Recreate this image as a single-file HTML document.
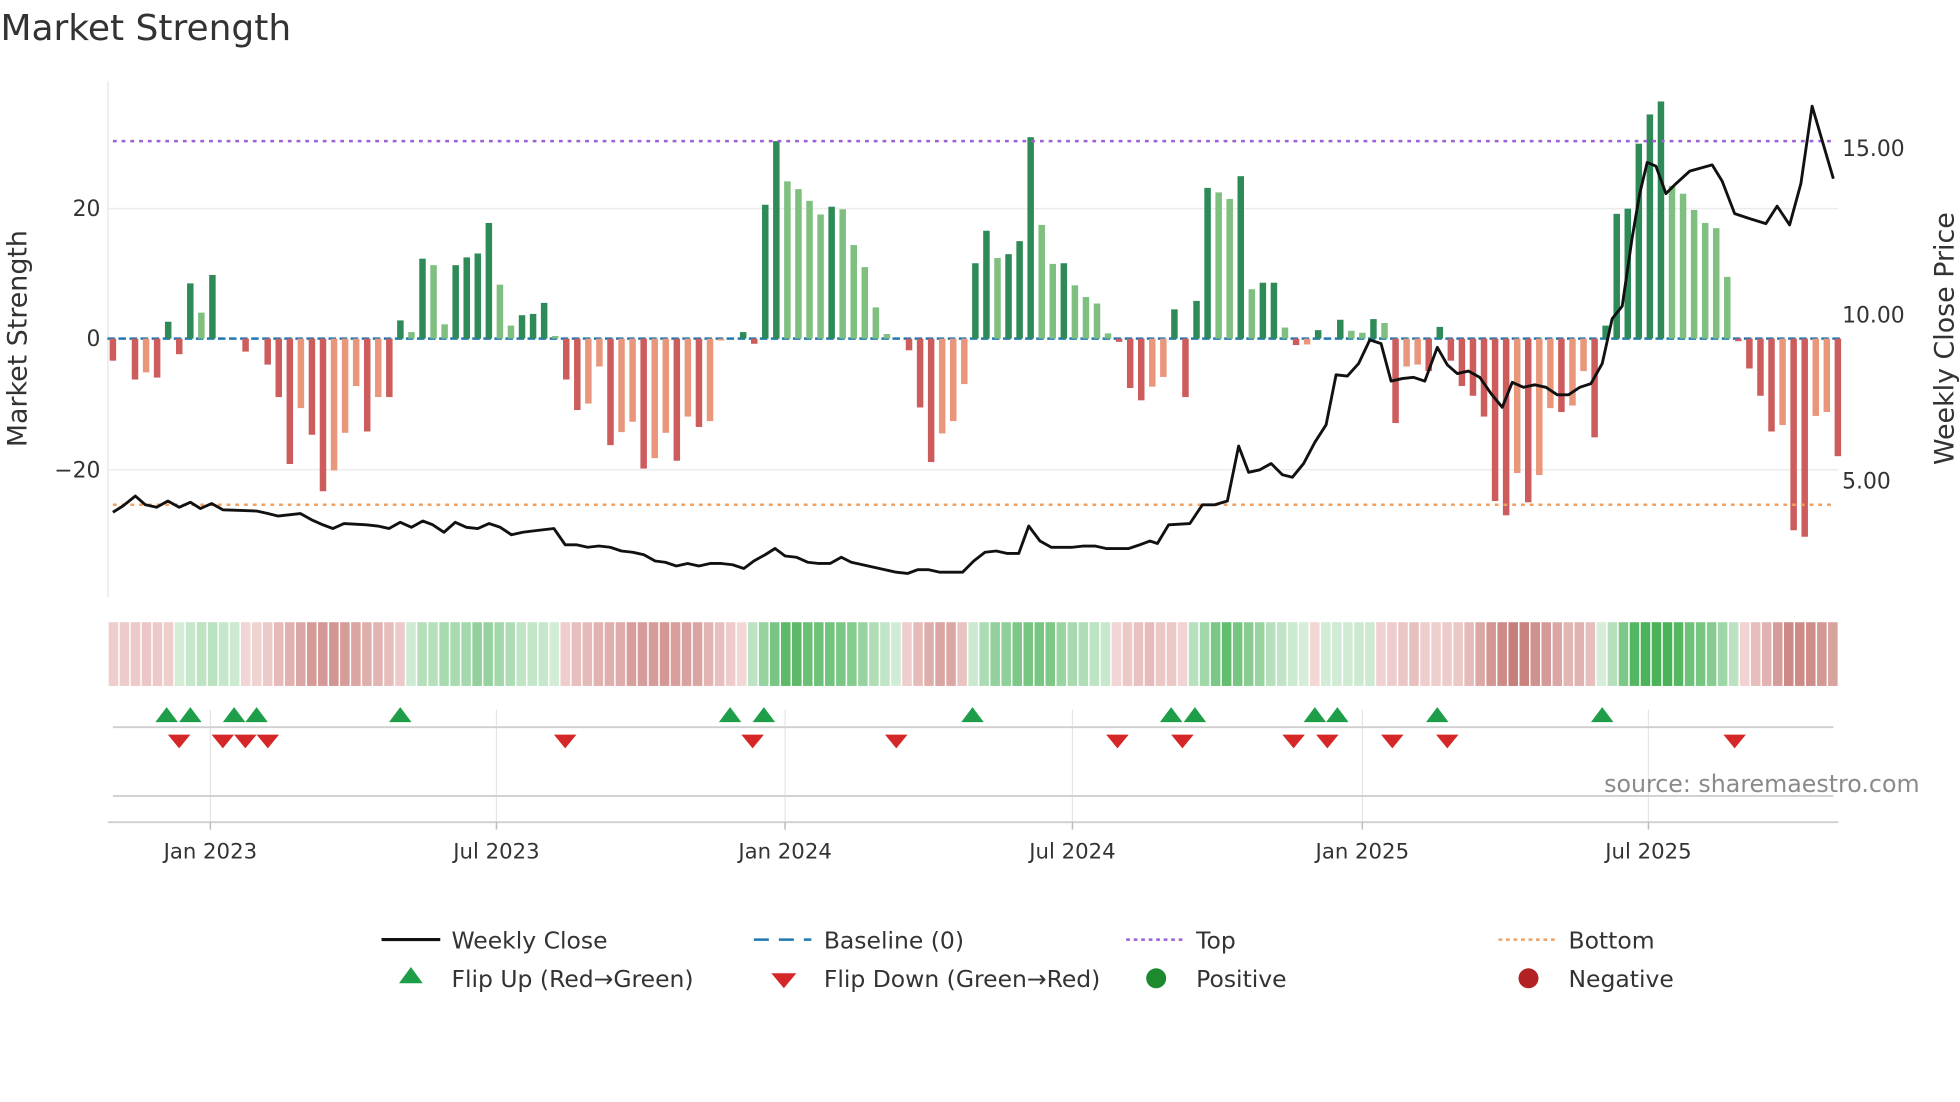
<!DOCTYPE html>
<html><head><meta charset="utf-8"><style>
html,body{margin:0;padding:0;background:#fff;}
svg{display:block;font-family:"DejaVu Sans","Liberation Sans",sans-serif;}
</style></head><body>
<svg id="s" width="1960" height="1102" viewBox="0 0 1568 882" xmlns="http://www.w3.org/2000/svg">
<rect width="1568" height="882" fill="#fff"/>
<text x="0" y="32" font-size="28.8" fill="#333">Market Strength</text>
<line x1="86" y1="65" x2="86" y2="478" stroke="#e6e6e6" stroke-width="1"/>
<line x1="86" y1="167" x2="1471" y2="167" stroke="#ececec" stroke-width="1.2"/>
<line x1="86" y1="376" x2="1471" y2="376" stroke="#ececec" stroke-width="1.2"/>
<g font-size="17.5" fill="#333" text-anchor="end">
<text x="80" y="173">20</text><text x="80" y="277">0</text><text x="80" y="382">−20</text></g>
<g font-size="17.5" fill="#333">
<text x="1474" y="125">15.00</text><text x="1474" y="258">10.00</text><text x="1474" y="391">5.00</text></g>
<text transform="translate(21,271) rotate(-90)" font-size="21.5" fill="#333" text-anchor="middle">Market Strength</text>
<text transform="translate(1563,271) rotate(-90)" font-size="21.5" fill="#333" text-anchor="middle">Weekly Close Price</text>
<g id="bars"></g>
<line x1="90" y1="113" x2="1467" y2="113" stroke="#9b5fd6" stroke-width="2" stroke-dasharray="3,4"/>
<line x1="90" y1="404" x2="1467" y2="404" stroke="#f0a060" stroke-width="2" stroke-dasharray="3,4"/>
<polyline id="price" fill="none" stroke="#111" stroke-width="2.3" stroke-linejoin="round"/>
<g id="strip"></g>
<g stroke="#e6e6e6" stroke-width="1">
<line x1="168" y1="568" x2="168" y2="658"/><line x1="397" y1="568" x2="397" y2="658"/><line x1="628" y1="568" x2="628" y2="658"/><line x1="858" y1="568" x2="858" y2="658"/><line x1="1090" y1="568" x2="1090" y2="658"/><line x1="1319" y1="568" x2="1319" y2="658"/></g>
<line x1="90" y1="582" x2="1467" y2="582" stroke="#cfcfcf" stroke-width="1.5"/>
<line x1="90" y1="637" x2="1467" y2="637" stroke="#cfcfcf" stroke-width="1.5"/>
<line x1="86" y1="658" x2="1471" y2="658" stroke="#cfcfcf" stroke-width="1.5"/>
<g stroke="#bbb" stroke-width="1.2">
<line x1="168" y1="658" x2="168" y2="664"/><line x1="397" y1="658" x2="397" y2="664"/><line x1="628" y1="658" x2="628" y2="664"/><line x1="858" y1="658" x2="858" y2="664"/><line x1="1090" y1="658" x2="1090" y2="664"/><line x1="1319" y1="658" x2="1319" y2="664"/></g>
<g id="marks"></g>
<text x="1536" y="634" font-size="19" fill="#8a8a8a" text-anchor="end">source: sharemaestro.com</text>
<g font-size="17" fill="#333" text-anchor="middle">
<text x="168" y="687">Jan 2023</text><text x="397" y="687">Jul 2023</text><text x="628" y="687">Jan 2024</text><text x="858" y="687">Jul 2024</text><text x="1090" y="687">Jan 2025</text><text x="1319" y="687">Jul 2025</text></g>
<g font-size="18.8" fill="#333">
<line x1="305" y1="752" x2="352" y2="752" stroke="#111" stroke-width="2.5"/>
<text x="361" y="759">Weekly Close</text>
<line x1="603" y1="752" x2="649" y2="752" stroke="#1f77b4" stroke-width="2" stroke-dasharray="12,8"/>
<text x="659" y="759">Baseline (0)</text>
<line x1="901" y1="752" x2="947" y2="752" stroke="#9b5fd6" stroke-width="2" stroke-dasharray="3,3"/>
<text x="957" y="759">Top</text>
<line x1="1199" y1="752" x2="1245" y2="752" stroke="#f0a060" stroke-width="2" stroke-dasharray="3,3"/>
<text x="1255" y="759">Bottom</text>
<polygon points="319,787 338,787 328.5,774" fill="#1e9e48"/>
<text x="361" y="790">Flip Up (Red→Green)</text>
<polygon points="617,779 637,779 627,791" fill="#d62728"/>
<text x="659" y="790">Flip Down (Green→Red)</text>
<circle cx="925" cy="783" r="8" fill="#1e8a2e"/>
<text x="957" y="790">Positive</text>
<circle cx="1223" cy="783" r="8" fill="#b22222"/>
<text x="1255" y="790">Negative</text>
</g>
</svg>
<script>
var V=[-3.4,0,-6.3,-5.2,-6,2.6,-2.4,8.5,4,9.8,0,0,-2,0,-4,-9,-19.3,-10.7,-14.8,-23.5,-20.3,-14.5,-7.3,-14.3,-9,-9,2.8,1,12.3,11.3,2.2,11.3,12.5,13.1,17.8,8.3,2,3.6,3.8,5.5,0.4,-6.3,-11,-10,-4.3,-16.4,-14.4,-12.8,-20,-18.4,-14.5,-18.8,-12,-13.6,-12.7,-0.3,0,1,-0.8,20.6,30.4,24.2,23,21.2,19.1,20.3,19.9,14.4,11,4.8,0.7,0,-1.8,-10.6,-19,-14.6,-12.7,-7,11.6,16.6,12.4,13,15,31,17.5,11.5,11.6,8.2,6.4,5.4,0.8,-0.5,-7.6,-9.5,-7.4,-5.9,4.5,-9,5.8,23.2,22.5,21.5,25,7.6,8.6,8.6,1.7,-1,-0.9,1.3,0,2.9,1.2,0.9,3,2.4,-13,-4.3,-4,-5,1.8,-3.4,-7.3,-8.8,-12,-25,-27.2,-20.7,-25.2,-21,-10.7,-11.3,-10.3,-5,-15.2,2,19.2,20,30,34.5,36.5,23.5,22.3,19.8,17.8,17,9.5,-0.4,-4.6,-8.8,-14.3,-13.3,-29.5,-30.5,-11.9,-11.3,-18.1];
var NS="http://www.w3.org/2000/svg",b=document.getElementById("bars"),st=document.getElementById("strip");
function el(t,a,p){var e=document.createElementNS(NS,t);for(var k in a)e.setAttribute(k,a[k]);p.appendChild(e);return e;}
var W=(1471-86)/V.length;
for(var i=0;i<V.length;i++){var v=V[i],x=90+8.85*i,prev=i>0?V[i-1]:0;
 el("line",{x1:x-4.4,y1:271,x2:x+4.4,y2:271,stroke:"#1f77b4","stroke-width":2,"stroke-dasharray":"6,3"},b);
 if(Math.abs(v)>0.05){var rising=Math.abs(v)>=Math.abs(prev)||Math.sign(v)!=Math.sign(prev);
  var c=v>0?(rising?"#2e8b57":"#7fbf7f"):(rising?"#cd5c5c":"#e9967a");
  var h=Math.abs(v)*5.2;el("rect",{x:x-2.6,y:v>0?271-h:271,width:5.2,height:Math.max(h,1.2),fill:c},b);}
 var s=(V[Math.max(i-2,0)]+V[Math.max(i-1,0)]+v+V[Math.min(i+1,V.length-1)])/4;
 var a=Math.min(Math.abs(s)/28,1);var col;
 if(s>=0){col="rgb("+Math.round(214-140*a)+","+Math.round(238-60*a)+","+Math.round(218-130*a)+")";}
 else{col="rgb("+Math.round(243-50*a)+","+Math.round(215-100*a)+","+Math.round(215-105*a)+")";}
 el("rect",{x:86+W*i+0.6,y:498,width:W-1.2,height:51,fill:col},st);}
var P=[[90,410],[98,405],[108,397],[116,404],[125,406],[134,401],[143,406],[152,402],[160,407],[169,403],[178,408],[205,409],[214,411],[222,413],[240,411],[249,416],[258,420],[266,423],[275,419],[293,420],[302,421],[311,423],[320,418],[329,422],[338,417],[346,420],[355,426],[364,418],[373,422],[382,423],[391,419],[400,422],[409,428],[418,426],[426,425],[443,423],[452,436],[461,436],[470,438],[479,437],[488,438],[497,441],[506,442],[515,444],[524,449],[532,450],[541,453],[550,451],[559,453],[568,451],[577,451],[586,452],[595,455],[603,449],[612,444],[620,439],[628,445],[637,446],[646,450],[655,451],[664,451],[673,446],[681,450],[690,452],[699,454],[708,456],[717,458],[726,459],[734,456],[743,456],[752,458],[770,458],[779,449],[788,442],[797,441],[806,443],[815,443],[823,421],[832,433],[841,438],[850,438],[858,438],[867,437],[876,437],[885,439],[894,439],[903,439],[912,436],[920,433],[926,435],[935,420],[952,419],[962,404],[972,404],[982,401],[991,357],[999,378],[1008,376],[1017,371],[1026,380],[1034,382],[1043,371],[1052,354],[1061,340],[1069,300],[1078,301],[1087,291],[1096,272],[1105,275],[1113,305],[1122,303],[1131,302],[1140,305],[1150,278],[1158,292],[1166,299],[1175,297],[1184,302],[1193,315],[1202,326],[1210,306],[1219,310],[1228,308],[1237,310],[1246,316],[1255,316],[1264,310],[1273,307],[1282,291],[1290,255],[1298,245],[1306,190],[1312,155],[1318,130],[1325,133],[1333,155],[1341,147],[1352,137],[1370,132],[1378,145],[1388,171],[1400,175],[1413,179],[1422,165],[1432,180],[1441,147],[1450,85],[1467,143]];
document.getElementById("price").setAttribute("points",P.map(function(p){return p.join(",")}).join(" "));
var m=document.getElementById("marks");
[133,152,187,205,320,584,611,778,937,956,1052,1070,1150,1282].forEach(function(x){el("polygon",{points:(x-9)+",578 "+(x+9)+",578 "+x+",566",fill:"#1e9e48"},m);});
[143,178,196,214,452,602,717,894,946,1035,1062,1114,1158,1388].forEach(function(x){el("polygon",{points:(x-9)+",588 "+(x+9)+",588 "+x+",599",fill:"#d62728"},m);});
</script>
</body></html>
